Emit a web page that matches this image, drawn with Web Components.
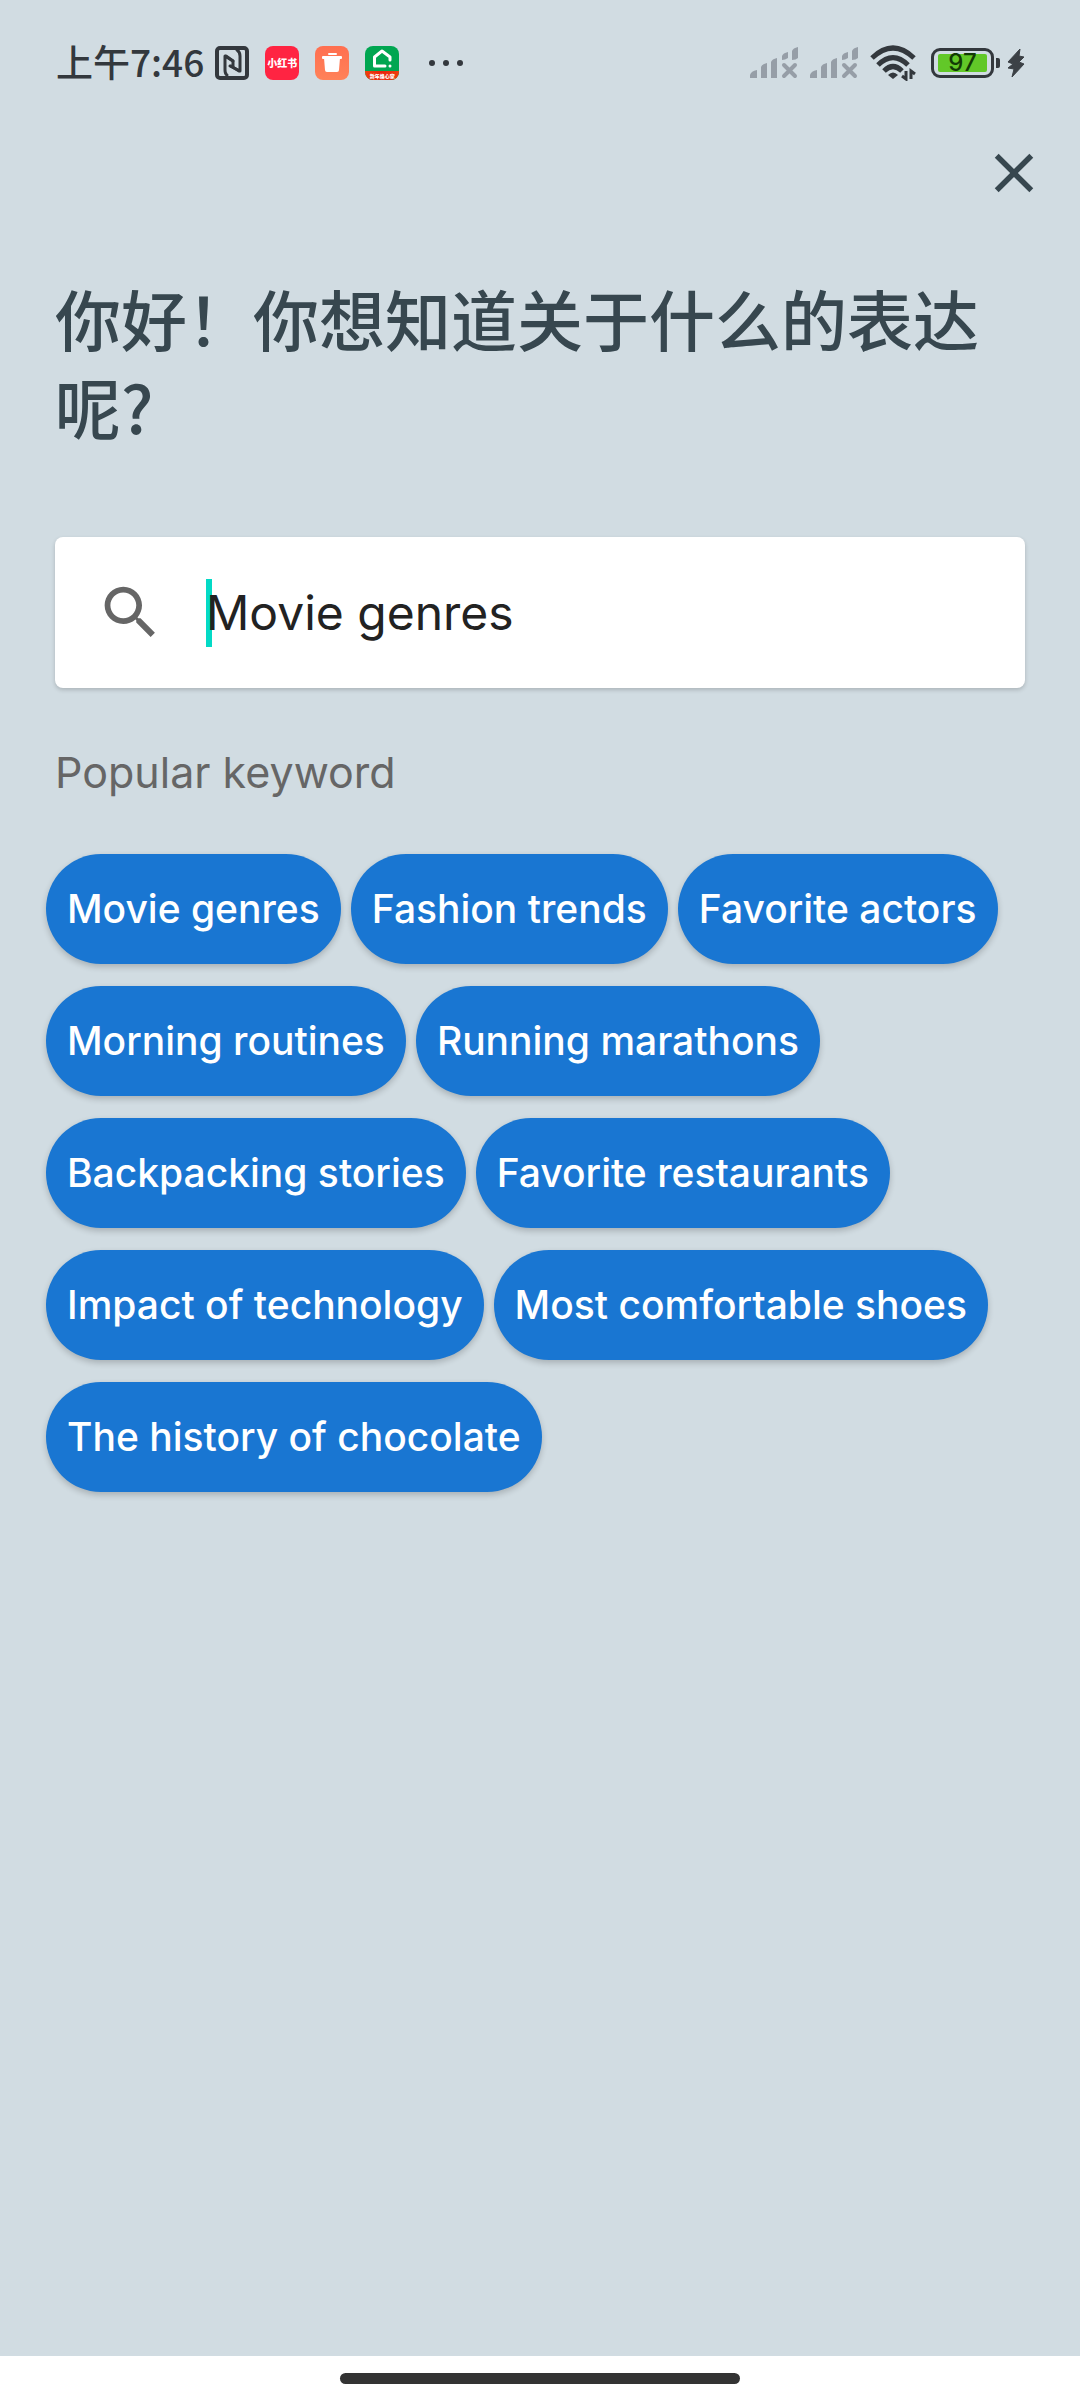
<!DOCTYPE html>
<html lang="zh-CN">
<head>
<meta charset="utf-8">
<meta name="viewport" content="width=device-width, initial-scale=1">
<title>Popular keyword</title>
<style>
  html { background: #d1dce2; }
  body { margin: 0; font-family: Inter, "Noto Sans CJK SC", sans-serif; color: #222; }
</style>
</head>
<body>
<keyword-screen>
  <status-bar slot="status"></status-bar>
  <close-button></close-button>
  <page-title>你好！你想知道关于什么的表达呢?</page-title>
  <search-field keyword="Movie genres"></search-field>
  <keyword-list heading="Popular keyword">
    <keyword-chip>Movie genres</keyword-chip>
    <keyword-chip>Fashion trends</keyword-chip>
    <keyword-chip>Favorite actors</keyword-chip>
    <keyword-chip>Morning routines</keyword-chip>
    <keyword-chip>Running marathons</keyword-chip>
    <keyword-chip>Backpacking stories</keyword-chip>
    <keyword-chip>Favorite restaurants</keyword-chip>
    <keyword-chip>Impact of technology</keyword-chip>
    <keyword-chip>Most comfortable shoes</keyword-chip>
    <keyword-chip>The history of chocolate</keyword-chip>
  </keyword-list>
  <nav-bar slot="nav"></nav-bar>
</keyword-screen>
<script>
const define = (name, html, setup) => {
  const template = document.createElement('template');
  template.innerHTML = html;
  customElements.define(name, class extends HTMLElement {
    connectedCallback() {
      if (this.shadowRoot) return;
      const root = this.attachShadow({ mode: 'open' });
      root.append(template.content.cloneNode(true));
      if (setup) setup(this, root);
    }
  });
};

define('keyword-screen', `
<style>
  :host { display: flex; flex-direction: column; min-height: 100vh; background: #d1dce2; }
  main { flex: 1; display: flex; flex-direction: column; }
</style>
<slot name="status"></slot>
<main><slot></slot></main>
<slot name="nav"></slot>`);

define('signal-icon', `
<style>:host { display: block; } svg { display: block; }</style>
<svg width="48" height="32" viewBox="0 0 48 32" fill="#969ea7" aria-hidden="true">
  <path d="M0 31v-3q1-4 7-5v8zM11 31V20q1-3 6-4v15zM21 31V15q1-3 6-4v20z"/>
  <path d="M32 13V9q1-3 6-4v6q-3 2-6 2zM42 13V4q1-3 6-4v11q-2 2-6 2z"/>
  <path d="M34 18l11 11M45 18L34 29" stroke="#969ea7" stroke-width="4" stroke-linecap="round"/>
</svg>`);

define('battery-icon', `
<style>
  :host { display: flex; align-items: center; gap: 2px; }
  .body { box-sizing: border-box; width: 63px; height: 30px; border: 3px solid #33383d; border-radius: 9px; padding: 3px 4px; display: flex; }
  .level { flex: 1; display: flex; align-items: center; justify-content: center; background: #62c828; border-radius: 2px; color: #123a05; font: 500 24px/18px Inter, sans-serif; }
  .tip { width: 4px; height: 10px; border-radius: 0 2px 2px 0; background: #33383d; }
</style>
<div class="body"><div class="level">97</div></div><div class="tip"></div>`);

define('status-bar', `
<style>
  :host { display: flex; justify-content: space-between; align-items: center; height: 126px; padding: 0 55px 0 56px; color: #33383d; }
  div { display: flex; align-items: center; }
  svg { display: block; flex: none; }
  .time { font: 500 37px/48px "Noto Sans CJK SC", sans-serif; padding-bottom: 4px; }
  .apps { gap: 16px; margin-left: 11px; }
  .app { width: 34px; height: 34px; border-radius: 8px; overflow: hidden; justify-content: center; color: #fff; white-space: nowrap; }
  .note { background: #ff2442; font: 900 10px/34px "Noto Sans CJK SC", sans-serif; }
  .trash { background: linear-gradient(#ff6f50, #ff8259); }
  .home { background: #00a651; flex-direction: column; justify-content: space-between; }
  .home span { width: 34px; text-align: center; background: linear-gradient(90deg, #f0400e, #e8220c, #f0400e); font: 900 5px/9px "Noto Sans CJK SC", sans-serif; }
  .more { margin-left: 14px; }
  .signals { gap: 12px; margin-right: 12px; }
  .battery { margin: 0 7px 0 15px; }
</style>
<div>
  <span class="time">上午7:46</span>
  <div class="apps">
    <svg width="34" height="34" viewBox="0 0 34 34" fill="none" stroke="#33383d" stroke-linecap="round" stroke-linejoin="round" role="img" aria-label="NFC">
      <rect x="2" y="2" width="30" height="30" rx="3" stroke-width="4"/>
      <path d="M12 29Q10 28 10 24V10L18 15" stroke-width="3"/>
      <path d="M22 4Q25 6 25 10V25L15 20" stroke-width="3"/>
      <path d="M11 10L18 15V21M24 25L16 20" stroke-width="3"/>
    </svg>
    <div class="app note">小红书</div>
    <div class="app trash">
      <svg width="34" height="34" viewBox="0 0 34 34" fill="#fff" aria-hidden="true">
        <rect x="13" y="7" width="9" height="2" rx="1"/><rect x="7" y="10" width="20" height="3" rx="1"/>
        <path d="M9 12h16l-1 12q0 2-2 2H12q-2 0-2-2z"/>
      </svg>
    </div>
    <div class="app home">
      <svg width="34" height="25" viewBox="0 0 34 25" fill="none" stroke="#fff" stroke-width="3" stroke-linecap="round" stroke-linejoin="round" aria-hidden="true">
        <path d="M25 14V11L17 5L9.500 11V20H20M25 20v.1"/>
      </svg>
      <span>新年焕心家</span>
    </div>
  </div>
  <svg class="more" width="66" height="34" viewBox="0 0 66 34" fill="#33383d" role="img" aria-label="More">
    <circle cx="19" cy="17" r="3"/><circle cx="33" cy="17" r="3"/><circle cx="47" cy="17" r="3"/>
  </svg>
</div>
<div>
  <div class="signals"><signal-icon></signal-icon><signal-icon></signal-icon></div>
  <svg width="46" height="36" viewBox="0 0 46 36" fill="none" stroke="#33383d" role="img" aria-label="Wi-Fi">
    <path d="M2 13Q23-7 44 13" stroke-width="5"/>
    <path d="M8 20Q23 5 38 20" stroke-width="5"/>
    <path d="M14 26Q23 17 32 26" stroke-width="5"/>
    <path d="M18 30Q23 25 28 30L23 34z" fill="#33383d" stroke="none"/>
    <path d="M36 26V34L32 31M41 34V26L45 29" stroke-width="3"/>
  </svg>
  <battery-icon class="battery"></battery-icon>
  <svg width="18" height="30" viewBox="0 0 18 30" fill="#3c4146" stroke="#3c4146" stroke-linejoin="round" role="img" aria-label="Charging">
    <path d="M13 1L1 14L6 16L1 20L7 21L5 29L17 16L12 14L17 9L12 8z"/>
  </svg>
</div>`);

define('close-button', `
<style>
  :host { display: flex; justify-content: flex-end; padding: 14px 33px 0; }
  button { display: block; padding: 0; border: 0; background: none; }
  svg { display: block; }
</style>
<button type="button" aria-label="Close">
  <svg width="66" height="66" viewBox="0 0 24 24" fill="#37474f"><path d="M19 6.410L17.590 5 12 10.590 6.410 5 5 6.410 10.590 12 5 17.590 6.410 19 12 13.410 17.590 19 19 17.590 13.410 12z"/></svg>
</button>`);

define('page-title', `
<style>
  :host { display: block; padding: 67px 55px 0; }
  h1 { margin: 0; font: 500 66px/88px "Noto Sans CJK SC", sans-serif; color: #37474f; }
</style>
<h1><slot></slot></h1>`);

define('search-field', `
<style>
  :host { display: block; padding: 88px 55px 0; }
  label { display: flex; align-items: center; gap: 41px; height: 151px; padding: 0 41px; box-sizing: border-box; border-radius: 8px; background: #fff; box-shadow: 0 2px 4px rgba(0, 0, 0, .18); }
  svg { display: block; flex: none; }
  .entry { position: relative; flex: 1; display: flex; align-items: center; height: 68px; }
  .caret { position: absolute; left: 0; top: 0; width: 6px; height: 68px; background: #03dac6; }
  input { position: relative; width: 100%; padding: 0; border: 0; outline: 0; background: transparent; font: 400 48px/68px Inter, sans-serif; color: #222; }
</style>
<label>
  <svg width="69" height="69" viewBox="0 0 24 24" fill="#666" role="img" aria-label="Search"><path d="M15.500 14h-.790l-.280-.270C15.410 12.590 16 11.110 16 9.500 16 5.910 13.090 3 9.500 3S3 5.910 3 9.500 5.910 16 9.500 16c1.610 0 3.090-.590 4.230-1.570l.270.280v.790l5 4.990L20.490 19l-4.990-5zm-6 0C7.010 14 5 11.990 5 9.500S7.010 5 9.500 5 14 7.010 14 9.500 11.990 14 9.500 14z"/></svg>
  <span class="entry"><span class="caret"></span><input type="text" aria-label="Search keyword"></span>
</label>`, (host, root) => {
  root.querySelector('input').value = host.getAttribute('keyword');
});

define('keyword-list', `
<style>
  :host { display: block; padding: 56px 44px 0 46px; }
  h2 { margin: 0 9px 54px; font: 400 43px/56px Inter, sans-serif; color: #666; }
  div { display: flex; flex-wrap: wrap; gap: 22px 10px; }
</style>
<h2></h2>
<div><slot></slot></div>`, (host, root) => {
  root.querySelector('h2').textContent = host.getAttribute('heading');
});

define('keyword-chip', `
<style>
  :host { display: block; }
  button { display: block; height: 110px; padding: 0 21px; border: 0; border-radius: 55px; background: #1976d2; color: #fff; font: 500 39px/48px Inter, sans-serif; white-space: nowrap; box-shadow: 0 3px 6px rgba(0, 0, 0, .2); }
</style>
<button type="button"><slot></slot></button>`);

define('nav-bar', `
<style>
  :host { display: flex; align-items: center; justify-content: center; height: 44px; background: #fff; }
  div { width: 37%; height: 11px; border-radius: 6px; background: #333; }
</style>
<div></div>`);
</script>
</body>
</html>
